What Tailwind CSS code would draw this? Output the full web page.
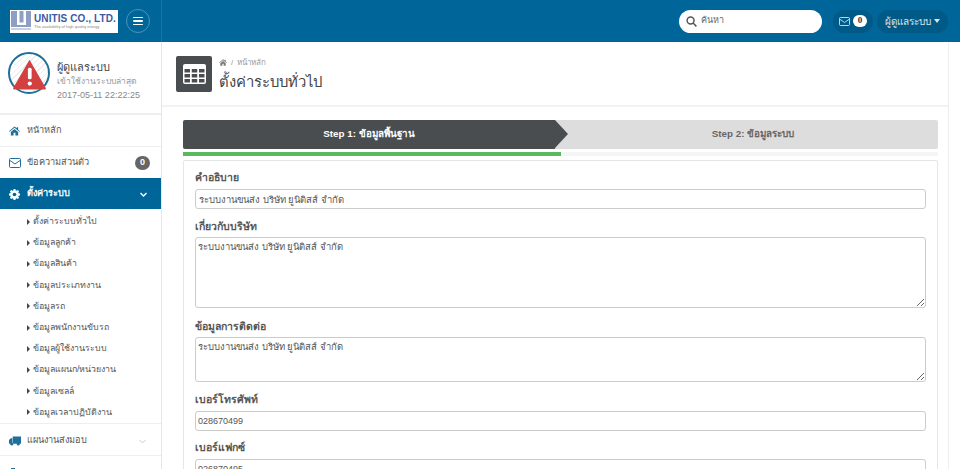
<!DOCTYPE html>
<html lang="th">
<head>
    <meta charset="UTF-8">
    <title>ตั้งค่าระบบทั่วไป</title>
    <script src="https://cdn.jsdelivr.net/npm/@tailwindcss/browser@4"></script>
</head>
<body class="h-[469px] overflow-hidden bg-white font-['Liberation_Sans','Noto_Sans',sans-serif] text-[10px] text-[#555]">
    <!-- top bar -->
    <header class="h-[42px] flex items-center bg-[#006699]">
        <div class="w-[162px] h-full shrink-0 flex items-center pl-[10px] border-r border-[#1a75a3]">
            <div class="w-[108px] h-[23px] bg-white flex items-center gap-[3px] px-[1px]">
                <svg class="w-[20px] h-[20px] shrink-0" viewBox="0 0 20 20"><rect width="20" height="16" fill="#8f9fc4"/><path d="M6 0h2.500v11.500h4V0H15v14H6z" fill="#fff"/><rect y="17" width="20" height="2" fill="#c9d0e0"/></svg>
                <div class="leading-none">
                    <div class="text-[10px] font-bold text-[#3a5aa5] whitespace-nowrap tracking-[0.1px]">UNITIS CO., LTD.</div>
                    <div class="text-[4px] text-[#888] mt-[1px] whitespace-nowrap">The availability of high quality energy</div>
                </div>
            </div>
            <button class="ml-[8px] w-[24px] h-[24px] rounded-full border border-[#4d94b8] flex flex-col items-center justify-center gap-[2px]">
                <span class="block w-[10px] h-[1.500px] bg-white rounded"></span>
                <span class="block w-[10px] h-[1.500px] bg-white rounded"></span>
                <span class="block w-[10px] h-[1.500px] bg-white rounded"></span>
            </button>
        </div>
        <div class="flex-1 flex items-center justify-end pr-[12px]">
            <div class="w-[143px] h-[23px] rounded-full bg-white flex items-center pl-[7px] gap-[4px] text-[9px] text-[#666]">
                <svg class="w-[11px] h-[11px]" viewBox="0 0 12 12" fill="none" stroke="#555" stroke-width="1.600"><circle cx="5" cy="5" r="3.800"/><path d="M8 8l3.300 3.300"/></svg>
                ค้นหา
            </div>
            <div class="ml-[11px] h-[23px] w-[40px] rounded-full bg-[#005a87] flex items-center justify-center gap-[3px]">
                <svg class="w-[11px] h-[9px]" viewBox="0 0 11 9" fill="none" stroke="#cfe3ee" stroke-width="0.900"><rect x="0.500" y="0.500" width="10" height="8" rx="1"/><path d="M0.500 2l5 3.500 5-3.500"/></svg>
                <span class="w-[14px] h-[12px] rounded-full bg-white text-[#333] text-[9px] font-bold flex items-center justify-center font-['Liberation_Serif',serif]">0</span>
            </div>
            <div class="ml-[4px] h-[23px] w-[71px] rounded-full bg-[#005a87] flex items-center justify-center gap-[3px] text-[10px] text-[#d5e6ef]">
                ผู้ดูแลระบบ
                <span class="w-0 h-0 border-x-[3.500px] border-x-transparent border-t-[4px] border-t-[#d5e6ef]"></span>
            </div>
        </div>
    </header>

    <div class="flex h-[427px] overflow-hidden">
        <!-- sidebar -->
        <aside class="w-[162px] shrink-0 border-r border-[#e6e6e6]">
            <div class="h-[73px] flex items-start pt-[10px] pl-[8px] border-b-2 border-[#eeeeee]">
                <div class="w-[42px] h-[42px] rounded-full border-2 border-[#1f6f99] bg-[repeating-linear-gradient(135deg,#ffffff_0,#ffffff_3px,#ececec_3px,#ececec_4px)] flex items-center justify-center shrink-0">
                    <svg class="w-[35px] h-[32px] mt-[2px]" viewBox="0 0 33 30"><path d="M16.500 1.500L32 28.500a1 1 0 0 1-1 1H2a1 1 0 0 1-1-1z" fill="#d2403f"/><rect x="15" y="9" width="3.500" height="11" rx="1.500" fill="#fff"/><circle cx="16.750" cy="24" r="2" fill="#fff"/></svg>
                </div>
                <div class="ml-[7px] pt-[8px]">
                    <div class="text-[11px] text-[#444] leading-[14px]">ผู้ดูแลระบบ</div>
                    <div class="text-[8.500px] text-[#999] leading-[13px] mt-[1px]">เข้าใช้งานระบบล่าสุด</div>
                    <div class="text-[9px] text-[#888] leading-[13px] mt-[1px] whitespace-nowrap">2017-05-11 22:22:25</div>
                </div>
            </div>
            <nav>
                <div class="h-[32px] flex items-center pl-[9px] gap-[7px] border-b border-[#eeeeee] text-[9.200px] text-[#555]">
                    <svg class="w-[11px] h-[10px]" viewBox="0 0 12 10" fill="#1f6f99"><path d="M6 0L0 5.200l.7.700L6 1.500l5.300 4.400.7-.7-2-1.700V1H8.500v.9zM2 6v4h3V7h2v3h3V6L6 2.700z"/></svg>
                    หน้าหลัก
                </div>
                <div class="h-[31px] flex items-center pl-[9px] pr-[11px] gap-[6px] text-[9.200px] text-[#555]">
                    <svg class="w-[12px] h-[10px]" viewBox="0 0 12 10" fill="none" stroke="#1f6f99" stroke-width="1"><rect x="0.500" y="0.500" width="11" height="9" rx="1"/><path d="M0.500 2.200L6 6l5.500-3.800"/></svg>
                    ข้อความส่วนตัว
                    <span class="ml-auto w-[15px] h-[14px] rounded-full bg-[#666] text-white text-[9px] font-bold flex items-center justify-center">0</span>
                </div>
                <div class="h-[31px] flex items-center pt-[1px] pl-[9px] pr-[14px] gap-[7px] bg-[#006699] text-[9.200px] font-bold text-white">
                    <svg class="w-[11px] h-[11px]" viewBox="0 0 12 12"><path d="M5 0h2l.3 1.500 1 .4L9.600 1 11 2.400l-.9 1.300.4 1L12 5v2l-1.500.3-.4 1 .9 1.300L9.600 11l-1.300-.9-1 .4L7 12H5l-.3-1.500-1-.4-1.300.9L1 9.600l.9-1.300-.4-1L0 7V5l1.500-.3.4-1L1 2.400 2.400 1l1.300.9 1-.4z" fill="#fff"/><circle cx="6" cy="6" r="2" fill="#006699"/></svg>
                    ตั้งค่าระบบ
                    <svg class="ml-auto w-[7px] h-[5px]" viewBox="0 0 7 5" fill="none" stroke="#fff" stroke-width="1.300"><path d="M.5 1l3 3 3-3"/></svg>
                </div>
                <ul class="h-[215px] pt-[2px] border-b border-[#eeeeee] text-[8.800px] text-[#555]">
                    <li class="h-[21.200px] flex items-center pl-[27px] gap-[3px]"><span class="w-0 h-0 border-y-[3px] border-y-transparent border-l-[3px] border-l-[#444]"></span>ตั้งค่าระบบทั่วไป</li>
                    <li class="h-[21.200px] flex items-center pl-[27px] gap-[3px]"><span class="w-0 h-0 border-y-[3px] border-y-transparent border-l-[3px] border-l-[#444]"></span>ข้อมูลลูกค้า</li>
                    <li class="h-[21.200px] flex items-center pl-[27px] gap-[3px]"><span class="w-0 h-0 border-y-[3px] border-y-transparent border-l-[3px] border-l-[#444]"></span>ข้อมูลสินค้า</li>
                    <li class="h-[21.200px] flex items-center pl-[27px] gap-[3px]"><span class="w-0 h-0 border-y-[3px] border-y-transparent border-l-[3px] border-l-[#444]"></span>ข้อมูลประเภทงาน</li>
                    <li class="h-[21.200px] flex items-center pl-[27px] gap-[3px]"><span class="w-0 h-0 border-y-[3px] border-y-transparent border-l-[3px] border-l-[#444]"></span>ข้อมูลรถ</li>
                    <li class="h-[21.200px] flex items-center pl-[27px] gap-[3px]"><span class="w-0 h-0 border-y-[3px] border-y-transparent border-l-[3px] border-l-[#444]"></span>ข้อมูลพนักงานขับรถ</li>
                    <li class="h-[21.200px] flex items-center pl-[27px] gap-[3px]"><span class="w-0 h-0 border-y-[3px] border-y-transparent border-l-[3px] border-l-[#444]"></span>ข้อมูลผู้ใช้งานระบบ</li>
                    <li class="h-[21.200px] flex items-center pl-[27px] gap-[3px]"><span class="w-0 h-0 border-y-[3px] border-y-transparent border-l-[3px] border-l-[#444]"></span>ข้อมูลแผนก/หน่วยงาน</li>
                    <li class="h-[21.200px] flex items-center pl-[27px] gap-[3px]"><span class="w-0 h-0 border-y-[3px] border-y-transparent border-l-[3px] border-l-[#444]"></span>ข้อมูลเซลล์</li>
                    <li class="h-[21.200px] flex items-center pl-[27px] gap-[3px]"><span class="w-0 h-0 border-y-[3px] border-y-transparent border-l-[3px] border-l-[#444]"></span>ข้อมูลเวลาปฏิบัติงาน</li>
                </ul>
                <div class="h-[32px] flex items-center pt-[3px] pl-[9px] pr-[15px] gap-[6px] border-b border-[#eeeeee] text-[9.200px] text-[#555]">
                    <svg class="w-[12px] h-[10px]" viewBox="0 0 13 10" fill="#1f6f99"><path d="M4 0h9v8H4zM0 4l2-2h1.500v6H0z"/><circle cx="3" cy="8.500" r="1.500"/><circle cx="10" cy="8.500" r="1.500"/></svg>
                    แผนงานส่งมอบ
                    <svg class="ml-auto w-[7px] h-[5px]" viewBox="0 0 7 5" fill="none" stroke="#ccc" stroke-width="1"><path d="M.5 1l3 3 3-3"/></svg>
                </div>
                <div class="h-[34px] flex items-center pl-[11px]">
                    <span class="block w-[4px] h-[10px] bg-[#1f6f99]"></span>
                </div>
            </nav>
        </aside>

        <!-- main -->
        <main class="w-[787px] shrink-0 border-r border-[#eeeeee]">
            <div class="h-[65px] flex items-center pl-[14px] border-b-2 border-[#f2f2f2]">
                <div class="w-[36px] h-[36px] rounded-[2px] bg-[#4a4d50] flex items-center justify-center">
                    <svg class="w-[23px] h-[20px]" viewBox="0 0 23 20"><rect width="23" height="20" rx="2" fill="#fff"/><path d="M1.500 5H7v3.500H1.500zM8.750 5h5.500v3.500h-5.500zM16 5h5.500v3.500H16zM1.500 10H7v3.500H1.500zM8.750 10h5.500v3.500h-5.500zM16 10h5.500v3.500H16zM1.500 15H7v3.500H1.500zM8.750 15h5.500v3.500h-5.500zM16 15h5.500v3.500H16z" fill="#4a4d50"/></svg>
                </div>
                <div class="ml-[7px] pt-[2px]">
                    <div class="flex items-center gap-[4px] text-[8px] text-[#999] leading-[12px]">
                        <svg class="w-[8px] h-[7px]" viewBox="0 0 12 10" fill="#777"><path d="M6 0L0 5.200l.7.700L6 1.500l5.300 4.400.7-.7-2-1.700V1H8.500v.9zM2 6v4h3V7h2v3h3V6L6 2.700z"/></svg>
                        / <span>หน้าหลัก</span>
                    </div>
                    <h1 class="text-[14.800px] leading-[22px] mt-[2px] text-[#444]">ตั้งค่าระบบทั่วไป</h1>
                </div>
            </div>

            <div class="pt-[13px] pl-[21px] pr-[10px]">
                <!-- wizard steps -->
                <div class="h-[29px] flex rounded-[2px] bg-[#dddddd] text-[9.800px] font-bold">
                    <div class="relative w-[372px] rounded-l-[2px] bg-[#4a4d50] text-white flex items-center justify-center">
                        Step 1: ข้อมูลพื้นฐาน
                        <span class="absolute left-full top-0 w-0 h-0 border-y-[14.500px] border-y-transparent border-l-[13px] border-l-[#4a4d50]"></span>
                    </div>
                    <div class="flex-1 pl-[13px] text-[#666] flex items-center justify-center">Step 2: ข้อมูลระบบ</div>
                </div>
                <div class="h-[4px] mt-[3px] bg-[#f5f5f5]">
                    <div class="h-full bg-[#5cb85c]" style="width:50%"></div>
                </div>

                <!-- form panel -->
                <div class="mt-[4px] border border-[#e6e6e6] rounded-[2px] px-[11px] pt-[9px] text-[#555]">
                    <label class="block text-[10.500px] font-bold leading-[15px] text-[#555]">คำอธิบาย</label>
                    <input class="mt-[4px] block w-full h-[20px] px-[3px] border border-[#cccccc] rounded-[3px] text-[9.500px] text-[#555]" value="ระบบงานขนส่ง บริษัท ยูนิติสส์ จำกัด">
                    <label class="block mt-[10px] text-[10.500px] font-bold leading-[15px] text-[#555]">เกี่ยวกับบริษัท</label>
                    <textarea class="mt-[3px] block w-full h-[71px] px-[2px] py-[2px] border border-[#cccccc] rounded-[3px] text-[9.500px] text-[#555]">ระบบงานขนส่ง บริษัท ยูนิติสส์ จำกัด</textarea>
                    <label class="block mt-[11px] text-[10.500px] font-bold leading-[15px] text-[#555]">ข้อมูลการติดต่อ</label>
                    <textarea class="mt-[3px] block w-full h-[45px] px-[2px] py-[2px] border border-[#cccccc] rounded-[3px] text-[9.500px] text-[#555]">ระบบงานขนส่ง บริษัท ยูนิติสส์ จำกัด</textarea>
                    <label class="block mt-[10px] text-[10.500px] font-bold leading-[15px] text-[#555]">เบอร์โทรศัพท์</label>
                    <input class="mt-[4px] block w-full h-[20px] px-[2px] border border-[#cccccc] rounded-[3px] text-[9px] text-[#555]" value="028670499">
                    <label class="block mt-[9px] text-[10.500px] font-bold leading-[15px] text-[#555]">เบอร์แฟกซ์</label>
                    <input class="mt-[4px] block w-full h-[20px] px-[2px] border border-[#cccccc] rounded-[3px] text-[9px] text-[#555]" value="026870495">
                </div>
            </div>
        </main>
    </div>
</body>
</html>
